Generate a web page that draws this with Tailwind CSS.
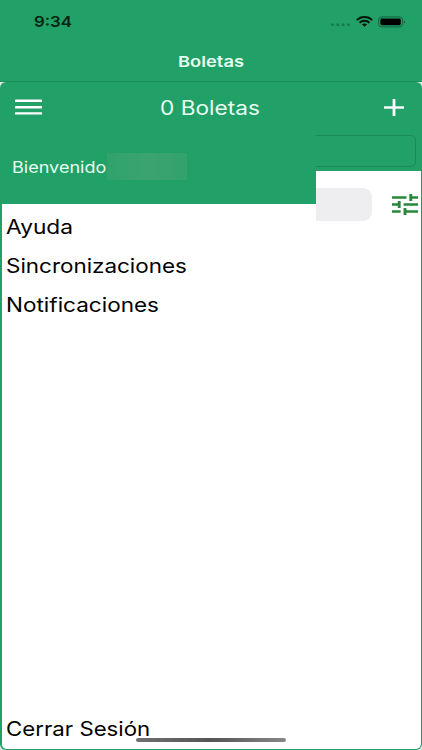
<!DOCTYPE html>
<html lang="es">
<head>
  <meta charset="UTF-8">
  <meta name="viewport" content="width=device-width, initial-scale=1.0">
  <title>Boletas</title>
  <script src="https://cdn.jsdelivr.net/npm/@tailwindcss/browser@4"></script>
</head>
<body class="w-[422px] h-[750px] overflow-hidden bg-[#dfe8e3] font-['Inter','Liberation_Sans',sans-serif]">
  <div class="relative flex flex-col w-[422px] h-[750px]">

    <!-- Status bar -->
    <div class="flex items-center h-[42px] pl-[34px] pr-[16px] bg-[#21a068]">
      <span class="inline-block origin-left scale-x-[1.12] pt-[1px] text-[15px] leading-[18px] font-semibold text-[#04240f]">9:34</span>
      <div class="flex items-center ml-auto">
        <svg class="w-[20px] h-[4px] mt-[8px] mr-[5px]" viewBox="0 0 20 4" fill="#187a4e">
          <rect x="0" y="0.5" width="3" height="2.6" rx="1"/>
          <rect x="5.3" y="0.5" width="3" height="2.6" rx="1"/>
          <rect x="10.6" y="0.5" width="3" height="2.6" rx="1"/>
          <rect x="15.9" y="0.5" width="3" height="2.6" rx="1"/>
        </svg>
        <svg class="w-[17px] h-[11px] mr-[5px]" viewBox="0 0 17 11" preserveAspectRatio="none" fill="none" stroke="#02160a" stroke-width="1.9">
          <path d="M0.8 4.2C5 0 12 0 16.2 4.2"/>
          <path d="M3.5 6.8c2.8-2.7 7.2-2.7 10 0"/>
          <path d="M5.9 8.5c1.5-1.3 3.7-1.3 5.2 0L8.5 10.8z" fill="#02160a" stroke="none"/>
        </svg>
        <svg class="w-[28px] h-[12px] mt-[1px]" viewBox="0 0 28 12">
          <rect x="0.6" y="0.9" width="24" height="10" rx="3" fill="none" stroke="#136440"/>
          <rect x="2.4" y="2.6" width="20.4" height="6.6" rx="1.4" fill="#000"/>
          <path d="M26 4.4c1.6.5 1.6 2.7 0 3.2z" fill="#136440"/>
        </svg>
      </div>
    </div>

    <!-- Navigation title -->
    <div class="flex items-center justify-center h-[40px] bg-[#21a068] border-b border-[#1c905c]">
      <h1 class="inline-block scale-x-[1.22] text-[15px] leading-[20px] font-semibold text-[#e6fff0]">Boletas</h1>
    </div>

    <!-- Screen -->
    <main class="relative flex flex-col flex-1 bg-[#21a068] rounded-[6px] px-[1.5px] pb-[1.5px] overflow-hidden">
      <div class="flex items-center justify-between h-[50px] shrink-0 pl-[13.5px] pr-[16.5px]">
        <svg class="w-[27px] h-[17px]" viewBox="0 0 27 17" fill="#fff">
          <rect y="0.6" width="27" height="2.4" rx="0.5"/>
          <rect y="7" width="27" height="2.4" rx="0.5"/>
          <rect y="13.2" width="27" height="2.4" rx="0.5"/>
        </svg>
        <h2 class="inline-block mr-[5px] pt-[2px] scale-x-[1.16] text-[19.5px] leading-6 text-[#e6fff0]">0 Boletas</h2>
        <svg class="w-[20px] h-[17px]" viewBox="0 0 20 17" fill="#fff">
          <rect x="0" y="7.3" width="20" height="2.4"/>
          <rect x="8.6" y="0" width="2.8" height="17"/>
        </svg>
      </div>
      <div class="h-[39px] shrink-0 pt-[3px] pl-[5px] pr-[4.5px]">
        <div class="h-[32px] border border-[#1b8a57] rounded-[5px]"></div>
      </div>
      <div class="flex-1 bg-white rounded-b-[5px]">
        <div class="flex items-center justify-between pt-[17px] pl-[10px] pr-[2.5px]">
          <div class="w-[360.5px] h-[33px] rounded-[9px] bg-[#eeeef0]"></div>
          <svg class="w-[26px] h-[21px]" viewBox="3 3 18 18" preserveAspectRatio="none" fill="#27883a">
            <path d="M3 17v2h6v-2H3zM3 5v2h10V5H3zm10 16v-2h8v-2h-8v-2h-2v6h2zM7 9v2H3v2h4v2h2V9H7zm14 4v-2H11v2h10zm-6-4h2V7h4V5h-4V3h-2v6z"/>
          </svg>
        </div>
      </div>

      <!-- Drawer -->
      <aside class="absolute left-[1.5px] top-[50px] bottom-[1.5px] flex flex-col w-[314.5px] rounded-bl-[5px] bg-white">
        <div class="flex items-center h-[72px] shrink-0 pl-[10px] pb-[3px] bg-[#21a068]">
          <span class="inline-block w-[95px]">
            <span class="inline-block origin-left scale-x-[1.165] text-[15.5px] leading-5 text-[#e6fff0]">Bienvenido</span>
          </span>
          <span class="w-[80px] h-[27px] bg-linear-to-r from-[#30a26c] via-[#3ba370] to-[#33a26d]"></span>
        </div>
        <nav class="flex flex-col items-start pt-[4px] pl-[4px] text-[19.5px] leading-[39px] text-black">
          <a class="inline-block origin-left scale-x-[1.165]">Ayuda</a>
          <a class="inline-block origin-left scale-x-[1.15]">Sincronizaciones</a>
          <a class="inline-block origin-left scale-x-[1.155]">Notificaciones</a>
        </nav>
        <a class="mt-auto self-start ml-[4px] -mb-[0.5px] origin-left scale-x-[1.14] text-[19.5px] leading-[39px] text-black">Cerrar Sesión</a>
      </aside>
    </main>

    <!-- Home indicator -->
    <div class="absolute left-[136px] top-[738px] w-[150px] h-[4px] rounded-full bg-linear-to-r from-[#707070] via-[#555] to-[#888]"></div>
  </div>
</body>
</html>
